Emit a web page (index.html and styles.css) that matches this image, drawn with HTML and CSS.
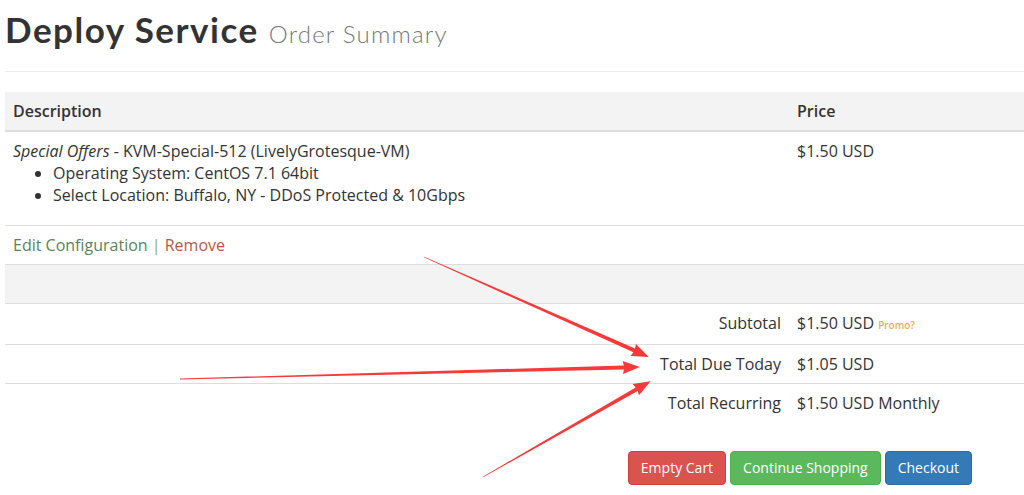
FILE: index.html
```html
<!DOCTYPE html>
<html>
<head>
<meta charset="utf-8">
<link rel="stylesheet" href="styles.css">
</head>
<body>
<div class="page">
  <h1 class="title">Deploy Service <small class="subtitle">Order Summary</small></h1>
  <hr class="rule">
  <table class="cart">
    <thead>
      <tr><th class="col-desc">Description</th><th class="col-price">Price</th></tr>
    </thead>
    <tbody>
      <tr>
        <td>
          <em>Special Offers</em> - KVM-Special-512 (LivelyGrotesque-VM)
          <ul class="opts">
            <li>Operating System: CentOS 7.1 64bit</li>
            <li>Select Location: Buffalo, NY - DDoS Protected &amp; 10Gbps</li>
          </ul>
        </td>
        <td>$1.50 USD</td>
      </tr>
      <tr>
        <td><a class="edit">Edit Configuration</a> <span class="sep">|</span> <a class="remove">Remove</a></td>
        <td></td>
      </tr>
      <tr class="spacer"><td>&nbsp;</td><td>&nbsp;</td></tr>
      <tr>
        <td class="label">Subtotal</td>
        <td>$1.50 USD <a class="promo">Promo?</a></td>
      </tr>
      <tr>
        <td class="label">Total Due Today</td>
        <td>$1.05 USD</td>
      </tr>
      <tr>
        <td class="label">Total Recurring</td>
        <td>$1.50 USD Monthly</td>
      </tr>
    </tbody>
  </table>
  <div class="actions">
    <a class="btn btn-danger">Empty Cart</a>
    <a class="btn btn-success">Continue Shopping</a>
    <a class="btn btn-primary">Checkout</a>
  </div>
  <svg class="arrows" width="1024" height="495" viewBox="0 0 1024 495">
    <g fill="#f53a3a">
      <polygon transform="translate(424 257) rotate(23.96)" points="0,-0.4 230,-2 229,-6.5 246,0 229,6.5 230,2 0,0.4"/>
      <polygon transform="translate(180 379) rotate(-1.49)" points="0,-0.4 444,-2 443,-6.5 460,0 443,6.5 444,2 0,0.4"/>
      <polygon transform="translate(483 477) rotate(-29.74)" points="0,-0.4 177,-2 176,-6.5 193,0 176,6.5 177,2 0,0.4"/>
    </g>
  </svg>
</div>
</body>
</html>
```
FILE: styles.css
```css
html, body {
  margin: 0;
  padding: 0;
  background: #fff;
}
body {
  font-family: "Open Sans", "Liberation Sans", sans-serif;
  font-size: 16px;
  line-height: 22px;
  color: #333;
  overflow: hidden;
}
.page {
  position: relative;
  padding-left: 5px;
  width: 1019px;
  height: 495px;
}
.title {
  margin: 0;
  padding-top: 9px;
  font-family: "Lato", "Liberation Sans", sans-serif;
  font-weight: 700;
  font-size: 35px;
  line-height: 40px;
  letter-spacing: 1.5px;
  color: #333;
}
.subtitle {
  font-family: "Lato", "Liberation Sans", sans-serif;
  font-weight: 300;
  font-size: 24px;
  color: #777;
  letter-spacing: 1.2px;
}
.rule {
  margin: 17px 0 20px;
  border: 0;
  border-top: 1px solid #eee;
}
.cart {
  width: 100%;
  border-collapse: collapse;
  border-spacing: 0;
}
.cart th,
.cart td {
  padding: 8px;
  text-align: left;
  vertical-align: top;
  border-top: 1px solid #ddd;
}
.cart thead th {
  background: #f3f3f3;
  border-top: 0;
  border-bottom: 2px solid #ddd;
  font-weight: 600;
}
.col-price {
  width: 219px;
}
.opts {
  margin: 0 0 11px;
  padding-left: 40px;
}
.edit {
  color: #5a845b;
}
.sep {
  color: #999;
}
.remove {
  color: #b05a4c;
}
.spacer td {
  background: #f3f3f3;
}
.cart td.label {
  text-align: right;
}
.promo {
  color: #f0ad4e;
  font-size: 10px;
  font-weight: 600;
}
.actions {
  margin-top: 29px;
  padding-right: 52px;
  display: flex;
  justify-content: flex-end;
  gap: 4px;
}
.btn {
  display: inline-block;
  padding: 5px 12px;
  font-size: 14px;
  line-height: 22px;
  color: #fff;
  border-radius: 4px;
  border: 1px solid transparent;
}
.btn-danger {
  background: #d9534f;
  border-color: #d43f3a;
}
.btn-success {
  background: #5cb85c;
  border-color: #4cae4c;
}
.btn-primary {
  background: #337ab7;
  border-color: #2e6da4;
}
.arrows {
  position: absolute;
  left: 0;
  top: 0;
  pointer-events: none;
}
```
